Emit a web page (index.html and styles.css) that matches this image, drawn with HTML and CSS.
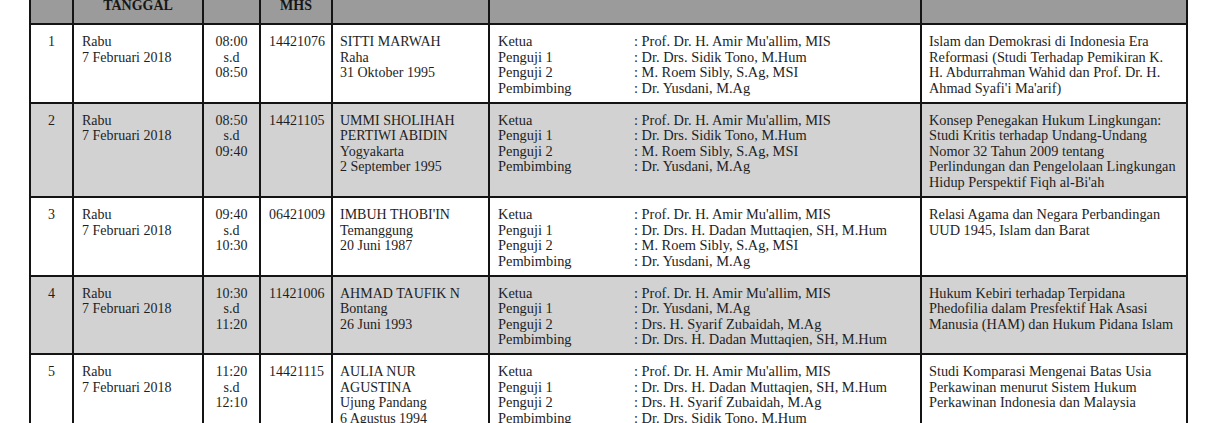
FILE: index.html
```html
<!DOCTYPE html>
<html lang="id">
<head>
<meta charset="utf-8">
<title>Jadwal Ujian</title>
<link rel="stylesheet" href="styles.css">
</head>
<body>
<table class="jadwal">
  <colgroup>
    <col class="c-no"><col class="c-tgl"><col class="c-jam"><col class="c-nim"><col class="c-nama"><col class="c-uji"><col class="c-judul">
  </colgroup>
  <thead>
    <tr>
      <th></th>
      <th>TANGGAL</th>
      <th></th>
      <th>MHS</th>
      <th></th>
      <th></th>
      <th></th>
    </tr>
  </thead>
  <tbody>
    <tr>
      <td class="center">1</td>
      <td>Rabu<br>7 Februari 2018</td>
      <td class="center">08:00<br>s.d<br>08:50</td>
      <td>14421076</td>
      <td class="name">SITTI MARWAH<br>Raha<br>31 Oktober 1995</td>
      <td>
        <div class="tim">
          <span>Ketua</span><span>: Prof. Dr. H. Amir Mu'allim, MIS</span>
          <span>Penguji 1</span><span>: Dr. Drs. Sidik Tono, M.Hum</span>
          <span>Penguji 2</span><span>: M. Roem Sibly, S.Ag, MSI</span>
          <span>Pembimbing</span><span>: Dr. Yusdani, M.Ag</span>
        </div>
      </td>
      <td class="judul">Islam dan Demokrasi di Indonesia Era<br>Reformasi (Studi Terhadap Pemikiran K.<br>H. Abdurrahman Wahid dan Prof. Dr. H.<br>Ahmad Syafi'i Ma'arif)</td>
    </tr>
    <tr class="alt">
      <td class="center">2</td>
      <td>Rabu<br>7 Februari 2018</td>
      <td class="center">08:50<br>s.d<br>09:40</td>
      <td>14421105</td>
      <td class="name">UMMI SHOLIHAH<br>PERTIWI ABIDIN<br>Yogyakarta<br>2 September 1995</td>
      <td>
        <div class="tim">
          <span>Ketua</span><span>: Prof. Dr. H. Amir Mu'allim, MIS</span>
          <span>Penguji 1</span><span>: Dr. Drs. Sidik Tono, M.Hum</span>
          <span>Penguji 2</span><span>: M. Roem Sibly, S.Ag, MSI</span>
          <span>Pembimbing</span><span>: Dr. Yusdani, M.Ag</span>
        </div>
      </td>
      <td class="judul">Konsep Penegakan Hukum Lingkungan:<br>Studi Kritis terhadap Undang-Undang<br>Nomor 32 Tahun 2009 tentang<br>Perlindungan dan Pengelolaan Lingkungan<br>Hidup Perspektif Fiqh al-Bi'ah</td>
    </tr>
    <tr>
      <td class="center">3</td>
      <td>Rabu<br>7 Februari 2018</td>
      <td class="center">09:40<br>s.d<br>10:30</td>
      <td>06421009</td>
      <td class="name">IMBUH THOBI'IN<br>Temanggung<br>20 Juni 1987</td>
      <td>
        <div class="tim">
          <span>Ketua</span><span>: Prof. Dr. H. Amir Mu'allim, MIS</span>
          <span>Penguji 1</span><span>: Dr. Drs. H. Dadan Muttaqien, SH, M.Hum</span>
          <span>Penguji 2</span><span>: M. Roem Sibly, S.Ag, MSI</span>
          <span>Pembimbing</span><span>: Dr. Yusdani, M.Ag</span>
        </div>
      </td>
      <td class="judul">Relasi Agama dan Negara Perbandingan<br>UUD 1945, Islam dan Barat</td>
    </tr>
    <tr class="alt">
      <td class="center">4</td>
      <td>Rabu<br>7 Februari 2018</td>
      <td class="center">10:30<br>s.d<br>11:20</td>
      <td>11421006</td>
      <td class="name">AHMAD TAUFIK N<br>Bontang<br>26 Juni 1993</td>
      <td>
        <div class="tim">
          <span>Ketua</span><span>: Prof. Dr. H. Amir Mu'allim, MIS</span>
          <span>Penguji 1</span><span>: Dr. Yusdani, M.Ag</span>
          <span>Penguji 2</span><span>: Drs. H. Syarif Zubaidah, M.Ag</span>
          <span>Pembimbing</span><span>: Dr. Drs. H. Dadan Muttaqien, SH, M.Hum</span>
        </div>
      </td>
      <td class="judul">Hukum Kebiri terhadap Terpidana<br>Phedofilia dalam Presfektif Hak Asasi<br>Manusia (HAM) dan Hukum Pidana Islam</td>
    </tr>
    <tr>
      <td class="center">5</td>
      <td>Rabu<br>7 Februari 2018</td>
      <td class="center">11:20<br>s.d<br>12:10</td>
      <td>14421115</td>
      <td class="name">AULIA NUR<br>AGUSTINA<br>Ujung Pandang<br>6 Agustus 1994</td>
      <td>
        <div class="tim">
          <span>Ketua</span><span>: Prof. Dr. H. Amir Mu'allim, MIS</span>
          <span>Penguji 1</span><span>: Dr. Drs. H. Dadan Muttaqien, SH, M.Hum</span>
          <span>Penguji 2</span><span>: Drs. H. Syarif Zubaidah, M.Ag</span>
          <span>Pembimbing</span><span>: Dr. Drs. Sidik Tono, M.Hum</span>
        </div>
      </td>
      <td class="judul">Studi Komparasi Mengenai Batas Usia<br>Perkawinan menurut Sistem Hukum<br>Perkawinan Indonesia dan Malaysia</td>
    </tr>
  </tbody>
</table>
</body>
</html>
```

FILE: styles.css
```css
html, body {
  margin: 0;
  padding: 0;
  background: #ffffff;
}

body {
  font-family: "Liberation Serif", "Times New Roman", serif;
  font-size: 14px;
  line-height: 15.6px;
  color: #1e1e1e;
  overflow: hidden;
}

.jadwal {
  border-collapse: collapse;
  table-layout: fixed;
  width: 1159px;
  margin: -6px 0 0 29px;
}

.c-no { width: 43px; }
.c-tgl { width: 130px; }
.c-jam { width: 57px; }
.c-nim { width: 72px; }
.c-nama { width: 157px; }
.c-uji { width: 432px; }
.c-judul { width: 266px; }

.jadwal th,
.jadwal td {
  border: 2px solid #141414;
  vertical-align: top;
  text-align: left;
  padding: 9px 8px 5.3px;
  white-space: nowrap;
  overflow: hidden;
}

.jadwal th {
  background: #9b9b9b;
  font-weight: bold;
  text-align: center;
  vertical-align: bottom;
  height: 17.5px;
  padding: 0 4px 9.5px;
  color: #161616;
}

.jadwal tr.alt td {
  background: #d2d2d2;
}

.jadwal td.center {
  text-align: center;
}

.jadwal td.name {
  padding-left: 7px;
  padding-right: 4px;
}

.jadwal td.judul {
  padding-left: 7px;
  padding-right: 2px;
  font-size: 14.3px;
}

.tim {
  display: grid;
  grid-template-columns: 136px auto;
  font-size: 14.4px;
}
```
